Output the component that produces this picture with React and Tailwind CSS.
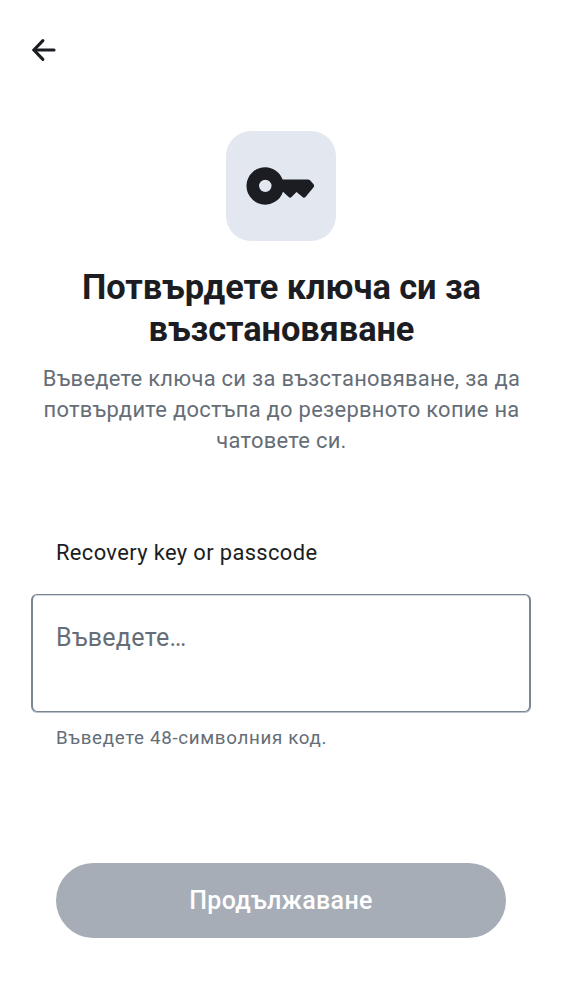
export default function App() {
  return (
    <main className="flex h-[1000px] w-[562px] flex-col overflow-hidden bg-white font-['Roboto',sans-serif] text-[#1b1d22]">
      <header className="h-[131px] shrink-0 pt-[31px] pl-[25px]">
        <button aria-label="Назад" className="block">
          <svg width="38" height="38" viewBox="0 0 38 38" fill="none" stroke="currentColor" strokeWidth="3.1" strokeLinecap="round"><path d="M29 19H9.5" /><path strokeLinejoin="miter" d="M17.9 9.7 8.9 19l9 9.3" /></svg>
        </button>
      </header>
      <section className="flex shrink-0 flex-col items-center text-center">
        <div className="size-[110px] rounded-[25px] bg-[#e3e8f0]">
          <svg width="110" height="110" viewBox="0 0 110 110" fill="currentColor"><path fillRule="evenodd" d="M39.3 36.2c7.8 0 14.6 5 17.4 12.3H82c.8 0 1.5.3 2 .8l3.4 3.8c.9 1 .9 2.4 0 3.4l-7.9 9.4c-.8.9-2.1 1-3 .2l-6-5-5 5c-.8.8-2 .8-2.8 0l-5.7-5.4A18.7 18.7 0 1 1 39.3 36.2m0 12.5a6.2 6.2 0 1 0 0 12.4 6.2 6.2 0 0 0 0-12.4" /></svg>
        </div>
        <h1 className="mt-[25px] pl-px text-[34.4px] leading-[42px] font-bold tracking-[-0.07px]">Потвърдете ключа си за<br />възстановяване</h1>
        <p className="mt-[13px] pl-px text-[21.9px] leading-[31px] tracking-[0.3px] text-[#656d77]">Въведете ключа си за възстановяване, за да<br />потвърдите достъпа до резервното копие на<br />чатовете си.</p>
      </section>
      <section className="mt-[80px] flex flex-col px-[31px]">
        <label htmlFor="key" className="px-[25px] text-[21.9px] leading-[34px] tracking-[0.37px]">Recovery key or passcode</label>
        <textarea id="key" placeholder="Въведете…" className="mt-[24px] h-[118px] resize-none rounded-[6px] border-x-2 border-y border-[#7b8693] px-[23px] py-[24px] text-[25px] leading-[37px] tracking-[0.3px] shadow-[inset_0_1px_0_#d5d9de,0_1px_0_#b9c0c8] outline-none placeholder:text-[#656d77]" />
        <p className="mt-[13px] px-[25px] text-[18.75px] leading-[26px] tracking-[0.67px] text-[#656d77]">Въведете 48-символния код.</p>
      </section>
      <button className="mx-[56px] mt-auto mb-[62.5px] h-[75px] shrink-0 rounded-full bg-[#a6adb7] pt-px text-[25px] font-medium tracking-[0.31px] text-white">Продължаване</button>
    </main>
  );
}
